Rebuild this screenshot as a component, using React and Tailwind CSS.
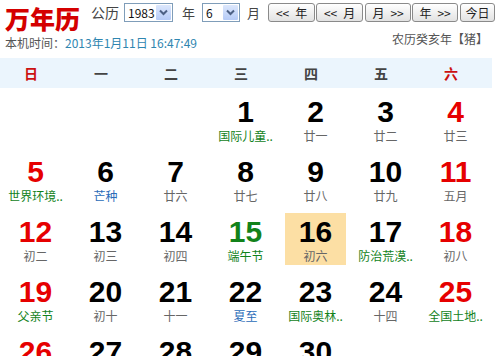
import { useState } from 'react';

/* ── Calendar data: June 1983 ──────────────────────────── */
// tone: n = normal lunar, g = festival (green), b = solar term (blue)
const WEEKS = [
  [null, null, null,
    { d: 1, t: '国际儿童..', tone: 'g' },
    { d: 2, t: '廿一' },
    { d: 3, t: '廿二' },
    { d: 4, t: '廿三' }],
  [{ d: 5, t: '世界环境..', tone: 'g' },
    { d: 6, t: '芒种', tone: 'b' },
    { d: 7, t: '廿六' },
    { d: 8, t: '廿七' },
    { d: 9, t: '廿八' },
    { d: 10, t: '廿九' },
    { d: 11, t: '五月' }],
  [{ d: 12, t: '初二' },
    { d: 13, t: '初三' },
    { d: 14, t: '初四' },
    { d: 15, t: '端午节', tone: 'g', holiday: true },
    { d: 16, t: '初六', today: true },
    { d: 17, t: '防治荒漠..', tone: 'g' },
    { d: 18, t: '初八' }],
  [{ d: 19, t: '父亲节', tone: 'g' },
    { d: 20, t: '初十' },
    { d: 21, t: '十一' },
    { d: 22, t: '夏至', tone: 'b' },
    { d: 23, t: '国际奥林..', tone: 'g' },
    { d: 24, t: '十四' },
    { d: 25, t: '全国土地..', tone: 'g' }],
  [{ d: 26, t: '' },
    { d: 27, t: '' },
    { d: 28, t: '' },
    { d: 29, t: '' },
    { d: 30, t: '' },
    null, null],
];

const WEEKDAYS = ['日', '一', '二', '三', '四', '五', '六'];

const TONE = {
  n: 'text-[#666]',
  g: 'text-[#12821a]',
  b: 'text-[#2a6cb8]',
};

/* ── Fake select box ───────────────────────────────────── */
const SelectBox = ({ value, width }) => (
  <div className={`flex h-[19px] items-stretch border border-[#7f9db9] bg-white ${width}`}>
    <span className="flex-1 pl-[3px] text-[12px] leading-[17px] text-[#111]">{value}</span>
    <span className="m-[1px] flex w-[15px] items-center justify-center rounded-[1px] bg-gradient-to-b from-[#dce7fc] to-[#b6cbf7]">
      <svg width="9" height="7" viewBox="0 0 9 7">
        <path d="M1 1.5 L4.5 5 L8 1.5" fill="none" stroke="#4d6185" strokeWidth="2" />
      </svg>
    </span>
  </div>
);

const NavButton = ({ parts, width, className = '' }) => (
  <button
    className={`flex h-[19px] items-center justify-center ${width} ${className} rounded-[3px] border border-[#8a8a8a] bg-gradient-to-b from-white to-[#e2e2e2] text-[12px] leading-[17px] text-[#222]`}
  >
    {parts.map((p, i) => (
      <span key={i} className={i > 0 ? 'ml-[6px]' : ''}>{p}</span>
    ))}
  </button>
);

/* ── Day cell ──────────────────────────────────────────── */
const DayCell = ({ day, col }) => {
  if (!day) return <div />;
  const weekend = col === 0 || col === 6;
  const numColor = weekend ? 'text-[#e60000]' : day.holiday ? 'text-[#12821a]' : 'text-black';
  return (
    <div
      className={`ml-[5px] flex h-[52px] w-[61px] flex-col items-center ${day.today ? 'bg-[#fcdfa4]' : ''}`}
    >
      <span
        className={`pt-[3px] font-['Liberation_Sans',Arial,sans-serif] text-[30px] font-bold leading-[32px] ${numColor}`}
      >
        {day.d}
      </span>
      <span className={`whitespace-nowrap text-[12px] leading-[16px] ${TONE[day.tone ?? 'n']}`}>{day.t}</span>
    </div>
  );
};

/* ── App ───────────────────────────────────────────────── */
export default function App() {
  const [year] = useState('1983');
  const [month] = useState('6');

  return (
    <div className="h-[356px] w-[500px] overflow-hidden bg-white font-['Noto_Sans_CJK_SC','Liberation_Sans',sans-serif]">

      {/* ── Top bar ─────────────────────────────────── */}
      <div className="flex h-[33px] items-start pl-[5px]">
        <h1 className="mt-[6px] text-[25px] font-black leading-[25px] text-[#d40000]">万年历</h1>
        <div className="mt-[3px] flex h-[19px] items-center">
          <span className="ml-[11px] text-[14px] text-[#444]">公历</span>
          <div className="ml-[5px]"><SelectBox value={year} width="w-[49px]" /></div>
          <span className="ml-[9px] text-[13px] text-[#444]">年</span>
          <div className="ml-[7px]"><SelectBox value={month} width="w-[38px]" /></div>
          <span className="ml-[7px] text-[13px] text-[#444]">月</span>
          <NavButton parts={['<<', '年']} width="w-[47px]" className="ml-[8px]" />
          <NavButton parts={['<<', '月']} width="w-[47px]" className="ml-[1px]" />
          <NavButton parts={['月', '>>']} width="w-[46px]" className="ml-[2px]" />
          <NavButton parts={['年', '>>']} width="w-[46px]" className="ml-[1px]" />
          <NavButton parts={['今日']} width="w-[35px]" className="ml-[2px]" />
        </div>
      </div>

      {/* ── Local time / lunar year ─────────────────── */}
      <div className="flex items-start justify-between pl-[5px] pr-[12px]">
        <p className="mt-[2px] text-[12px] leading-[16px] text-[#555]">
          本机时间：<span className="text-[#2f86b0]">2013年1月11日 16:47:49</span>
        </p>
        <p className="mt-[-2px] text-[12px] leading-[16px] text-[#555]">农历癸亥年【猪】</p>
      </div>

      {/* ── Weekday header ──────────────────────────── */}
      <div className="mt-[7px] h-[30px] w-[492px] bg-[#ebf5fd]">
        <div className="ml-[-4px] grid h-full grid-cols-[repeat(7,70px)] items-center">
          {WEEKDAYS.map((w, i) => (
            <span
              key={w}
              className={`text-center text-[14px] font-bold ${i === 0 || i === 6 ? 'text-[#cc1111]' : 'text-[#444]'}`}
            >
              {w}
            </span>
          ))}
        </div>
      </div>

      {/* ── Day grid ────────────────────────────────── */}
      <div className="mt-[5px]">
        {WEEKS.map((week, r) => (
          <div key={r} className="grid h-[60px] grid-cols-[repeat(7,70px)]">
            {week.map((day, c) => (
              <DayCell key={c} day={day} col={c} />
            ))}
          </div>
        ))}
      </div>
    </div>
  );
}
